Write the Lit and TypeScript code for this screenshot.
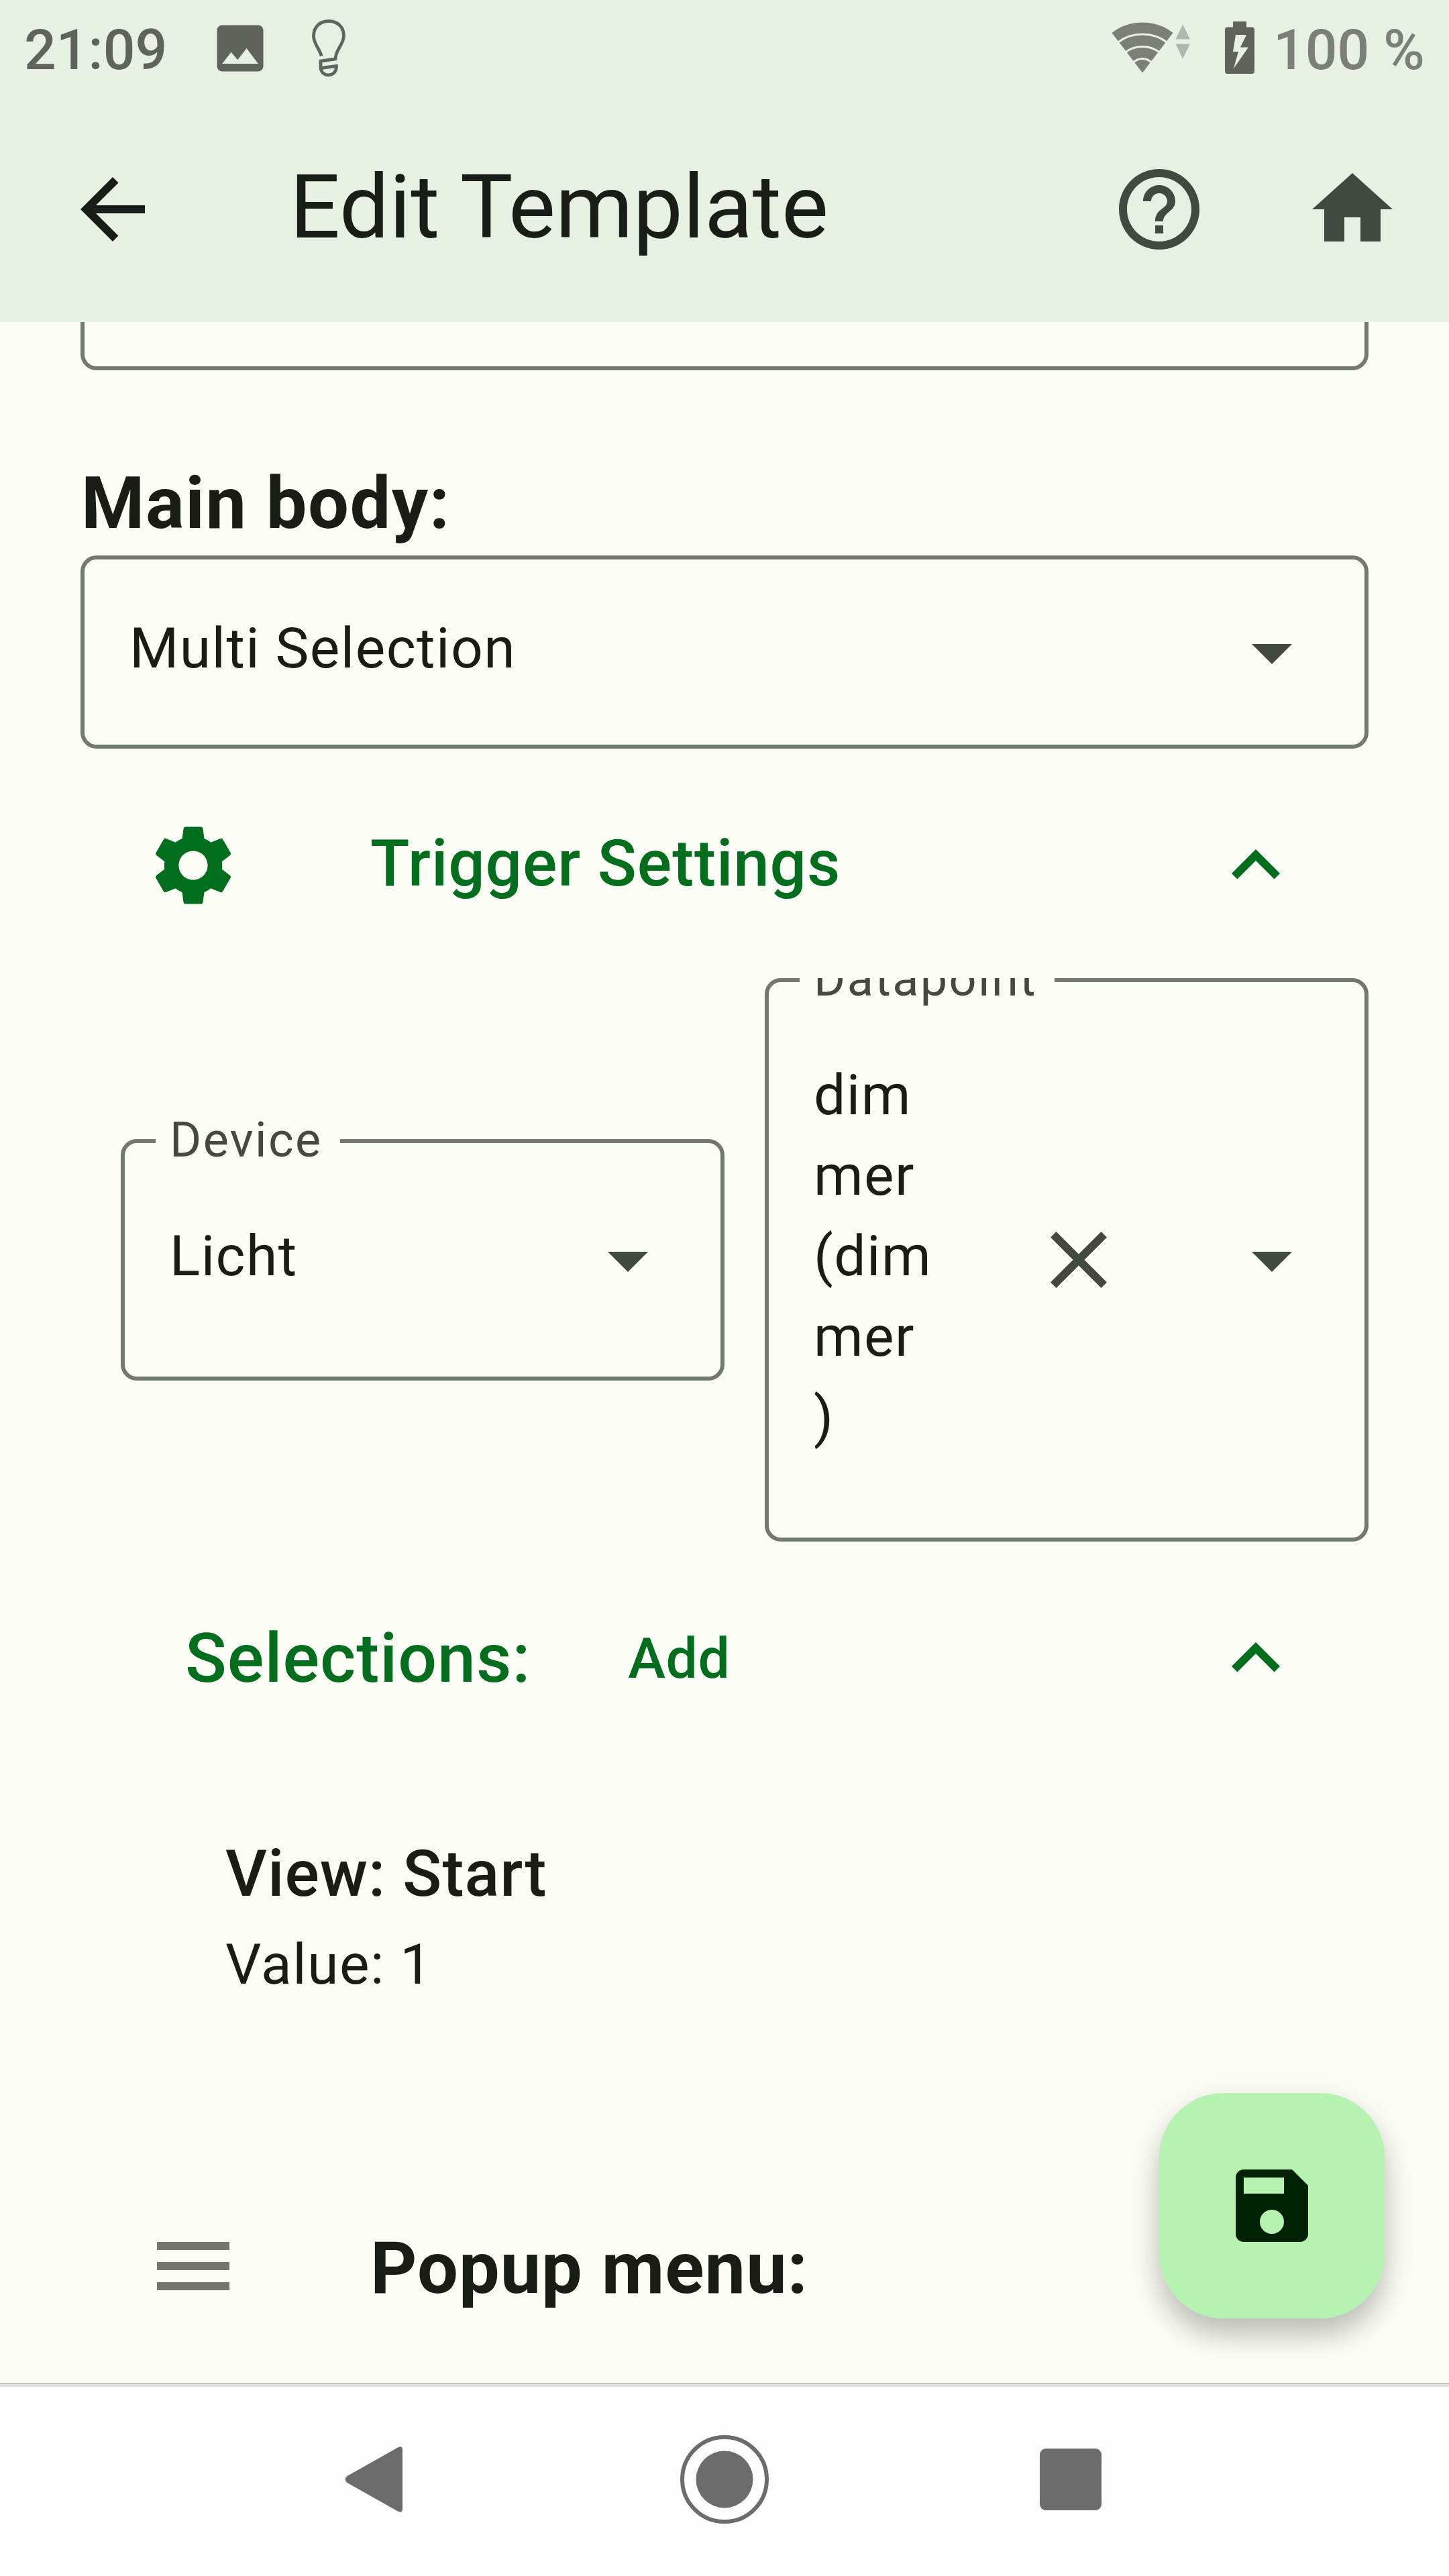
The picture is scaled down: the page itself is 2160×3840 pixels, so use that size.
import { LitElement, html, css, svg, nothing } from "lit";
import { customElement, property } from "lit/decorators.js";

const ICONS: Record<string, string> = {
  back: "M20 11H7.83l5.59-5.59L12 4l-8 8 8 8 1.41-1.41L7.83 13H20v-2z",
  help: "M11 18h2v-2h-2v2zm1-16C6.48 2 2 6.48 2 12s4.48 10 10 10 10-4.48 10-10S17.52 2 12 2zm0 18c-4.41 0-8-3.59-8-8s3.59-8 8-8 8 3.59 8 8-3.59 8-8 8zm0-14c-2.21 0-4 1.79-4 4h2c0-1.1.9-2 2-2s2 .9 2 2c0 2-3 1.75-3 5h2c0-2.25 3-2.5 3-5 0-2.21-1.79-4-4-4z",
  home: "M10 20v-6h4v6h5v-8h3L12 3 2 12h3v8z",
  gear: "M19.14 12.94c.04-.3.06-.61.06-.94 0-.32-.02-.64-.07-.94l2.03-1.58c.18-.14.23-.41.12-.61l-1.92-3.32c-.12-.22-.37-.29-.59-.22l-2.39.96c-.5-.38-1.03-.7-1.62-.94l-.36-2.54c-.04-.24-.24-.41-.48-.41h-3.84c-.24 0-.43.17-.47.41l-.36 2.54c-.59.24-1.13.57-1.62.94l-2.39-.96c-.22-.08-.47 0-.59.22L2.74 8.87c-.12.21-.08.47.12.61l2.03 1.58c-.05.3-.09.63-.09.94s.02.64.07.94l-2.03 1.58c-.18.14-.23.41-.12.61l1.92 3.32c.12.22.37.29.59.22l2.39-.96c.5.38 1.03.7 1.62.94l.36 2.54c.05.24.24.41.48.41h3.84c.24 0 .44-.17.47-.41l.36-2.54c.59-.24 1.13-.56 1.62-.94l2.39.96c.22.08.47 0 .59-.22l1.92-3.32c.12-.22.07-.47-.12-.61l-2.01-1.58zM12 15.6c-1.98 0-3.6-1.62-3.6-3.6s1.62-3.6 3.6-3.6 3.6 1.62 3.6 3.6-1.62 3.6-3.6 3.6z",
  collapse: "M12 8l-6 6 1.41 1.41L12 10.83l4.59 4.58L18 14z",
  dropdown: "M7 10l5 5 5-5z",
  close: "M19 6.41L17.59 5 12 10.59 6.41 5 5 6.41 10.59 12 5 17.59 6.41 19 12 13.41 17.59 19 19 17.59 13.41 12z",
  menu: "M3 18h18v-2H3v2zm0-5h18v-2H3v2zm0-7v2h18V6H3z",
  save: "M17 3H5c-1.11 0-2 .9-2 2v14c0 1.1.89 2 2 2h14c1.1 0 2-.9 2-2V7l-4-4zm-5 16c-1.66 0-3-1.34-3-3s1.34-3 3-3 3 1.34 3 3-1.34 3-3 3zm3-10H5V5h10v4z",
  image: "M21 19V5c0-1.1-.9-2-2-2H5c-1.1 0-2 .9-2 2v14c0 1.1.9 2 2 2h14c1.1 0 2-.9 2-2zM8.5 13.5l2.5 3.01L14.5 12l4.5 6H5l3.5-4.5z",
};

@customElement("md-icon")
class MdIcon extends LitElement {
  @property() name = "";
  static styles = css`
    :host { display: block; flex: none; width: 144px; height: 144px; }
    .glyph { display: block; width: 100%; height: 100%; fill: currentColor; }
  `;
  render() {
    return html`<svg class="glyph" viewBox="0 0 24 24">${svg`<path d=${ICONS[this.name] ?? ""}></path>`}</svg>`;
  }
}

@customElement("select-field")
class SelectField extends LitElement {
  @property() label = "";
  @property() value = "";
  @property({ type: Boolean }) clearable = false;
  static styles = css`
    :host { display: block; }
    .box {
      position: relative; box-sizing: border-box; height: 100%;
      display: flex; align-items: center;
      border: 6px solid #727970; border-radius: 24px;
      padding: 0 66px;
    }
    .clipped { clip-path: inset(0); }
    .label {
      position: absolute; left: 46px; top: -46px; height: 84px; line-height: 84px;
      padding: 0 26px 0 21px; background: #fcfdf6; color: #444a42;
      font-size: 72px; letter-spacing: 2.4px; white-space: nowrap;
    }
    .value {
      font-size: 84px; line-height: 120px; letter-spacing: 1.45px;
      padding: 0 0 10px 1px; overflow-wrap: anywhere;
    }
    .narrow { width: 180px; }
    .actions { margin-left: auto; display: flex; gap: 144px; color: #424940; }
  `;
  render() {
    return html`<div class="box ${this.clearable ? "clipped" : ""}">
      ${this.label ? html`<span class="label">${this.label}</span>` : nothing}
      <div class="value ${this.clearable ? "narrow" : ""}">${this.value}</div>
      <div class="actions">
        ${this.clearable ? html`<md-icon name="close"></md-icon>` : nothing}
        <md-icon name="dropdown"></md-icon>
      </div>
    </div>`;
  }
}

@customElement("status-bar")
class StatusBar extends LitElement {
  static styles = css`
    :host { display: flex; height: 144px; color: #60625c; font-size: 84px; line-height: 150px; font-weight: 500; }
    .clock { margin-left: 36px; width: 276px; }
    .image { width: 92px; height: 92px; margin-top: 26px; }
    svg { display: block; flex: none; margin-top: 20px; }
    .bulb { margin-left: 46px; }
    .wifi { margin-left: auto; }
    .battery { margin-left: 10px; }
    .percent { color: #7b7f78; width: 262px; white-space: nowrap; margin-left: -12px; }
  `;
  render() {
    return html`
      <div class="clock">21:09</div>
      <md-icon class="image" name="image"></md-icon>
      <svg class="bulb" width="80" height="100" viewBox="0 0 80 100" fill="none" stroke="#60665f" stroke-width="4.8">
        <path d="M29 63.500C27.500 54 17.500 46 17.500 33.500C17.500 20 27 11.500 40 11.500S62.500 20 62.500 33.500C62.500 46 50 54 50 68L28 71V80C28 96 52 96 51.500 78.500L28 81.500"></path>
      </svg>
      <svg class="wifi" width="160" height="100" viewBox="0 0 160 100">
        <path fill="#7b7f78" d="M63 88.500L17.500 29Q37 13.500 63 13.500T108.500 29Z"></path>
        <g fill="none" stroke="#e8f0e4" stroke-width="3">
          <path d="M26 43.500Q42 31 63 31T100 43.500"></path>
          <path d="M37 58.500Q48 49.500 63 49.500T89 58.500"></path>
          <path d="M49 73.500Q55 67.500 63 67.500T77 73.500"></path>
        </g>
        <path fill="#b0b7ad" d="M123 16.500L134 38.500H112.500ZM112.500 45.500H134L123 67.500Z"></path>
      </svg>
      <svg class="battery" width="100" height="100" viewBox="0 0 100 100">
        <path fill="#60625c" fill-rule="evenodd" d="M28 12H48V20.500H56Q60 20.500 60 24.500V86Q60 90 56 90H20Q16 90 16 86V24.500Q16 20.500 20 20.500H28ZM32 32L28 57H36L29 82L51 50.500H39L48 32Z"></path>
      </svg>
      <div class="percent">100 %</div>`;
  }
}

@customElement("nav-bar")
class NavBar extends LitElement {
  static styles = css`
    :host {
      display: grid; grid-template-columns: 1fr 140px 1fr; align-items: center;
      box-sizing: border-box; height: 288px; background: #fefefe;
      border-top: 1px solid #a2a29e; box-shadow: inset 0 5px #e0e0e0; padding-bottom: 1px;
      color: #6c6c6c;
    }
    svg { display: block; fill: currentColor; }
    .back { justify-self: end; margin-right: 409px; }
    .home { justify-self: center; }
    .recent { margin-left: 400px; }
  `;
  render() {
    return html`
      <svg class="back" width="88" height="100" viewBox="0 0 88 100">
        <path d="M4.500 45L80 2.500Q87 -1 87 6V94Q87 101 80 97.500L4.500 55Q-1 50 4.500 45Z"></path>
      </svg>
      <svg class="home" width="140" height="140" viewBox="0 0 140 140">
        <circle cx="70" cy="70" r="63" fill="none" stroke="currentColor" stroke-width="6"></circle>
        <circle cx="70" cy="70" r="42.500"></circle>
      </svg>
      <svg class="recent" width="92" height="92" viewBox="0 0 92 92"><rect width="92" height="92" rx="9"></rect></svg>`;
  }
}

@customElement("app-root")
export class AppRoot extends LitElement {
  static styles = css`
    :host {
      display: flex; flex-direction: column; position: relative;
      width: 2160px; height: 3840px; overflow: hidden;
      background: #fcfdf6; color: #1a1c18;
      font-family: Roboto, "Liberation Sans", sans-serif;
    }
    .header { flex: none; height: 480px; background: #e8f0e4; }
    .appbar { display: flex; align-items: center; height: 336px; padding: 0 72px 0 96px; }
    .title { margin: 0 auto 0 192px; padding-bottom: 7px; font-size: 132px; line-height: 168px; font-weight: 400; }
    .appbar .tool { color: #424940; margin-left: 144px; }
    .content { flex: 1; min-height: 0; overflow: hidden; padding: 0 120px; }
    .previous {
      box-sizing: border-box; height: 72px; border: 6px solid #727970; border-top: 0;
      border-radius: 0 0 24px 24px; margin-bottom: 120px;
    }
    .heading { font-size: 108px; line-height: 156px; font-weight: 700; }
    .main-heading { letter-spacing: 1.5px; padding-left: 1px; }
    .body-type { height: 288px; margin-bottom: 6px; }
    .row { display: flex; align-items: center; height: 336px; padding-right: 96px; }
    .green { color: #006e1c; }
    .trigger { padding-left: 96px; }
    .trigger .text { margin-left: 192px; padding-bottom: 6px; font-size: 96px; font-weight: 500; letter-spacing: .9px; }
    .push { margin-left: auto; }
    .fields { display: grid; grid-template-columns: 900px 900px; gap: 60px; align-items: center; padding-left: 60px; height: 840px; margin-bottom: 6px; }
    .device { height: 360px; }
    .datapoint { height: 840px; }
    .selections { padding-left: 156px; }
    .selections .text { font-size: 102px; font-weight: 500; letter-spacing: 1px; }
    .add { font-size: 84px; font-weight: 500; letter-spacing: .6px; margin-left: 145px; }
    .item { padding: 81px 216px 0; }
    .item .name { font-size: 96px; line-height: 144px; font-weight: 500; letter-spacing: 1px; }
    .item .sub { font-size: 84px; line-height: 128px; letter-spacing: 1.5px; }
    .popup { display: flex; align-items: center; margin-top: 313px; padding-left: 96px; }
    .popup md-icon { color: #74756f; margin-bottom: 6px; }
    .popup .heading { margin-left: 192px; line-height: 144px; letter-spacing: 1px; }
    .fab {
      position: absolute; left: 1728px; top: 3120px; width: 336px; height: 336px;
      display: grid; place-items: center; border-radius: 96px;
      background: #b6f2b0; color: #002204;
      box-shadow: 0 26px 40px rgba(0,0,0,.22), 0 8px 60px rgba(0,0,0,.06);
    }
  `;
  render() {
    return html`
      <header class="header">
        <status-bar></status-bar>
        <div class="appbar">
          <md-icon name="back"></md-icon>
          <h1 class="title">Edit Template</h1>
          <md-icon class="tool" name="help"></md-icon>
          <md-icon class="tool" name="home"></md-icon>
        </div>
      </header>
      <main class="content">
        <div class="previous"></div>
        <div class="heading main-heading">Main body:</div>
        <select-field class="body-type" value="Multi Selection"></select-field>
        <div class="row trigger green">
          <md-icon name="gear"></md-icon>
          <span class="text">Trigger Settings</span>
          <md-icon class="push" name="collapse"></md-icon>
        </div>
        <div class="fields">
          <select-field class="device" label="Device" value="Licht"></select-field>
          <select-field class="datapoint" label="Datapoint" value="dimmer (dimmer)" clearable></select-field>
        </div>
        <div class="row selections green">
          <span class="text">Selections:</span>
          <span class="add">Add</span>
          <md-icon class="push" name="collapse"></md-icon>
        </div>
        <div class="item">
          <div class="name">View: Start</div>
          <div class="sub">Value: 1</div>
        </div>
        <div class="popup">
          <md-icon name="menu"></md-icon>
          <span class="heading">Popup menu:</span>
        </div>
      </main>
      <nav-bar></nav-bar>
      <div class="fab"><md-icon name="save"></md-icon></div>`;
  }
}
